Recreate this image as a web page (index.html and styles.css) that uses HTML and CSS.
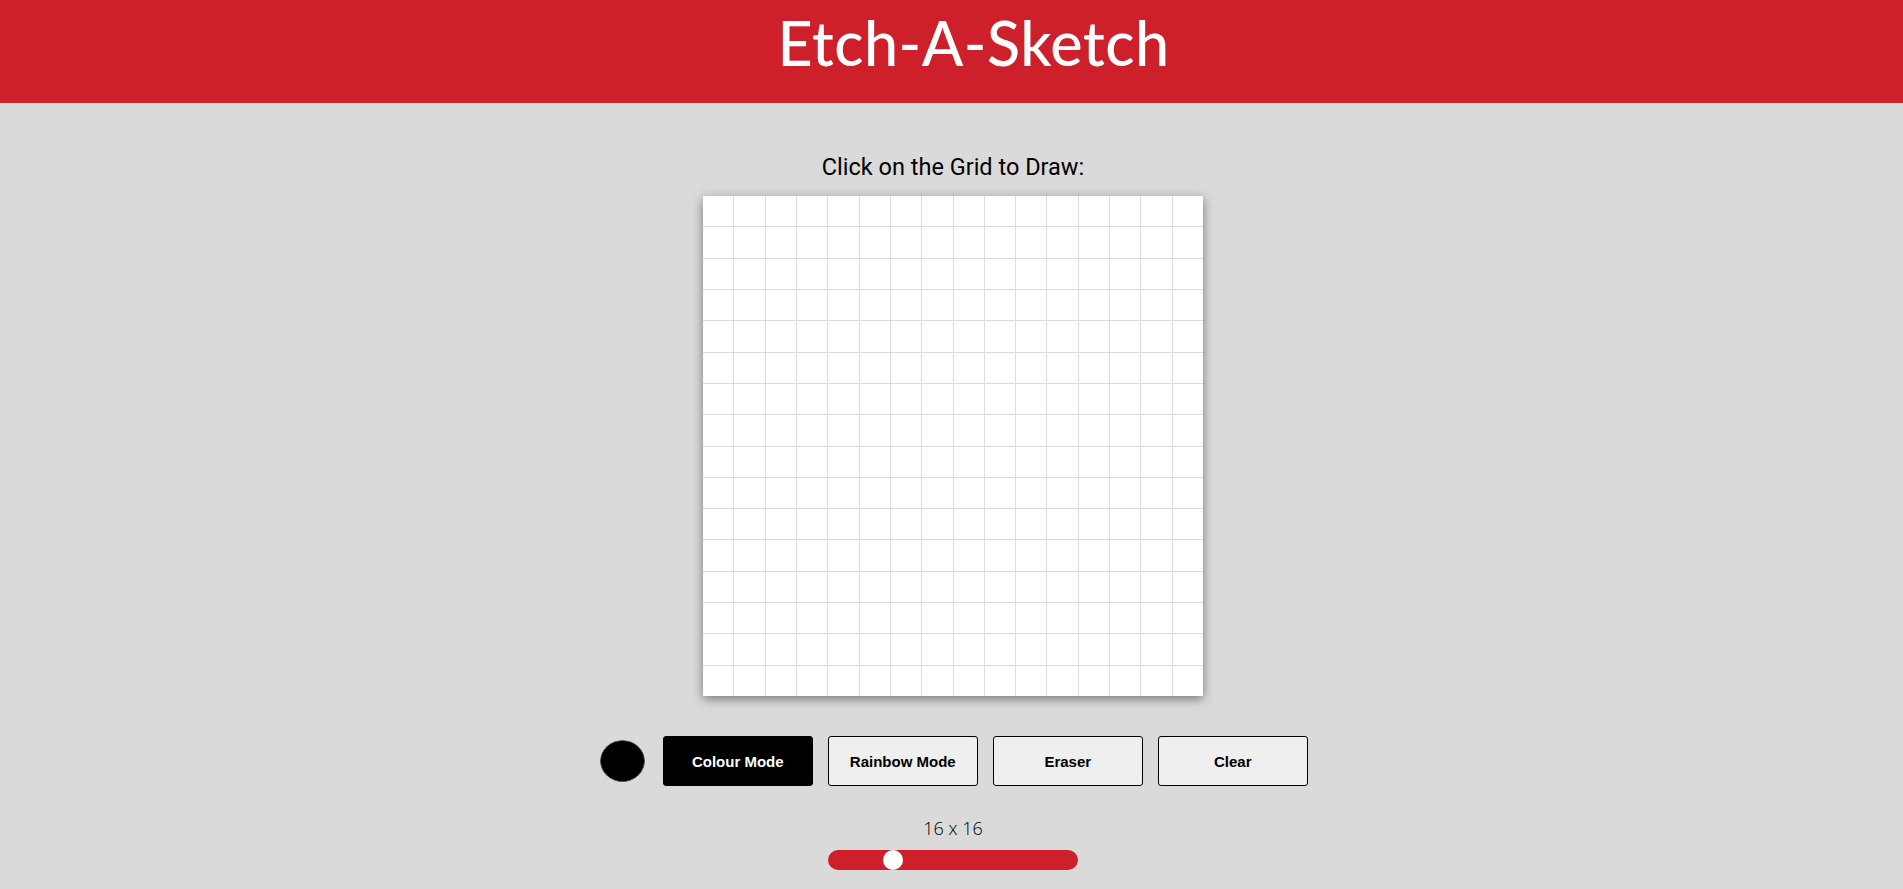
FILE: index.html
```html
<!DOCTYPE html>
<html lang="en">
<head>
<meta charset="utf-8">
<title>Etch-A-Sketch</title>
<link rel="stylesheet" href="styles.css">
</head>
<body>
<header class="site-header">
  <h1 class="site-title">Etch-A-Sketch</h1>
</header>
<main class="main">
  <p class="prompt">Click on the Grid to Draw:</p>
  <div class="board" id="board"></div>
  <div class="controls">
    <input class="colour-picker" type="color" value="#000000">
    <button class="btn btn-active">Colour Mode</button>
    <button class="btn">Rainbow Mode</button>
    <button class="btn">Eraser</button>
    <button class="btn">Clear</button>
  </div>
  <p class="size-label">16 x 16</p>
  <input class="size-slider" type="range" min="1" max="64" value="16">
</main>
<script src="script.js"></script>
</body>
</html>
```

FILE: styles.css
```css
* { box-sizing: border-box; }

html, body {
  margin: 0;
  padding: 0;
  background: #dadada;
  overflow: hidden;
}

.site-header {
  height: 103px;
  background: #ce202b;
  padding-top: 6px;
}

.site-title {
  margin: 0;
  padding-left: 44px;
  text-align: center;
  color: #fff;
  font-family: "Lato", sans-serif;
  font-weight: 500;
  font-size: 61px;
  line-height: 1.2;
  letter-spacing: 0.5px;
}

.main {
  display: flex;
  flex-direction: column;
  align-items: center;
  padding-left: 3px;
}

.prompt {
  margin: 50px 0 0;
  font-family: "Roboto", sans-serif;
  font-size: 23.5px;
  line-height: 28px;
  color: #000;
}

.board {
  margin-top: 15px;
  width: 500px;
  height: 500px;
  display: grid;
  grid-template-columns: repeat(16, 1fr);
  grid-template-rows: repeat(16, 1fr);
  gap: 1px;
  background: #dcdcdc;
  box-shadow: 0 3px 10px rgba(0, 0, 0, 0.45);
}

.cell {
  background: #fff;
}

.controls {
  margin-top: 40px;
  padding-left: 1.5px;
  display: flex;
  align-items: center;
  gap: 15px;
}

.colour-picker {
  -webkit-appearance: none;
  appearance: none;
  width: 45px;
  height: 42px;
  margin: 0 3px 0 0;
  padding: 0;
  border: none;
  border-radius: 50%;
  background: transparent;
  cursor: pointer;
}

.colour-picker::-webkit-color-swatch-wrapper {
  padding: 0;
}

.colour-picker::-webkit-color-swatch {
  border: 1px solid #555;
  border-radius: 50%;
}

.btn {
  width: 150px;
  height: 50px;
  border: 1px solid #000;
  border-radius: 3px;
  background: #efefef;
  color: #000;
  font-family: "Liberation Sans", Arial, sans-serif;
  font-weight: 700;
  font-size: 15px;
  cursor: pointer;
}

.btn-active {
  background: #000;
  color: #fff;
}

.size-label {
  margin: 30px 0 0;
  font-family: "Open Sans", sans-serif;
  font-weight: 300;
  font-size: 18px;
  line-height: 24.5px;
  color: #000;
}

.size-slider {
  -webkit-appearance: none;
  appearance: none;
  margin: 9px 0 0;
  width: 250px;
  height: 20px;
  border-radius: 10px;
  background: #ce202b;
  outline: none;
}

.size-slider::-webkit-slider-thumb {
  -webkit-appearance: none;
  appearance: none;
  width: 20px;
  height: 20px;
  border-radius: 50%;
  background: #fff;
  border: none;
  cursor: pointer;
}
```

FILE: script.js
```js
const board = document.getElementById('board');
for (let i = 0; i < 256; i++) {
  const cell = document.createElement('div');
  cell.className = 'cell';
  board.appendChild(cell);
}
```
